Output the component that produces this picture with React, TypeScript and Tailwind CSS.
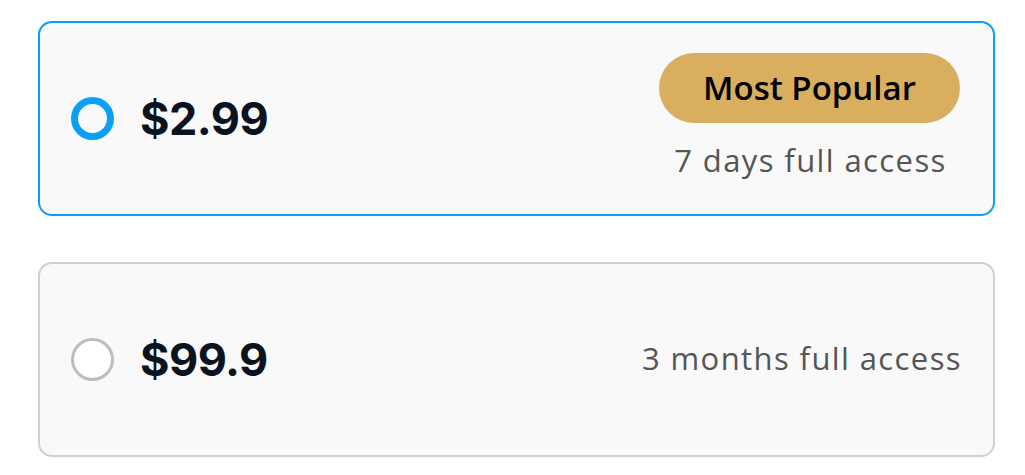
import { useState } from 'react'

type Plan = {
  id: string
  price: string
  period: string
  badge?: string
}

const plans: Plan[] = [
  { id: 'week', price: '$2.99', period: '7 days full access', badge: 'Most Popular' },
  { id: 'quarter', price: '$99.9', period: '3 months full access' },
]

const label = { fontFamily: '"Open Sans", "Noto Sans", sans-serif' }
const num = { fontFamily: 'Inter, "Liberation Sans", sans-serif' }

export default function App() {
  const [selected, setSelected] = useState('week')

  return (
    <div className="min-h-screen bg-white pt-[21px] pl-[38px] pr-[30px]">
      <div className="flex flex-col gap-[46px]">
        {plans.map((p) => {
          const active = p.id === selected
          return (
            <button
              key={p.id}
              onClick={() => setSelected(p.id)}
              className={
                'flex h-[195px] items-center justify-between rounded-[14px] border-2 bg-[#f9f9f9] pl-[31px] pr-[33px] text-left ' +
                (active ? 'border-[#0aa0f5]' : 'border-[#d0d0d0]')
              }
            >
              <div className="flex items-center gap-[26px]">
                {active ? (
                  <span className="block h-[43px] w-[43px] rounded-full border-[7px] border-[#0aa0f5] bg-[#f9f9f9]" />
                ) : (
                  <span className="block h-[43px] w-[43px] rounded-full border-[3px] border-[#bdbdbd] bg-white" />
                )}
                <span style={num} className="text-[45px] font-bold leading-none tracking-[-0.5px] text-[#0b1220]">
                  {p.price}
                </span>
              </div>

              <div className="flex flex-col items-center gap-[17px] pb-[4px]" style={label}>
                {p.badge && (
                  <span className="flex h-[70px] w-[301px] items-center justify-center rounded-full bg-[#d9ae5f] text-[33px] font-semibold text-black">
                    {p.badge}
                  </span>
                )}
                <span className="mr-[-2px] text-[31px] font-normal leading-[40px] tracking-[1.4px] text-[#555555]">
                  {p.period}
                </span>
              </div>
            </button>
          )
        })}
      </div>
    </div>
  )
}
